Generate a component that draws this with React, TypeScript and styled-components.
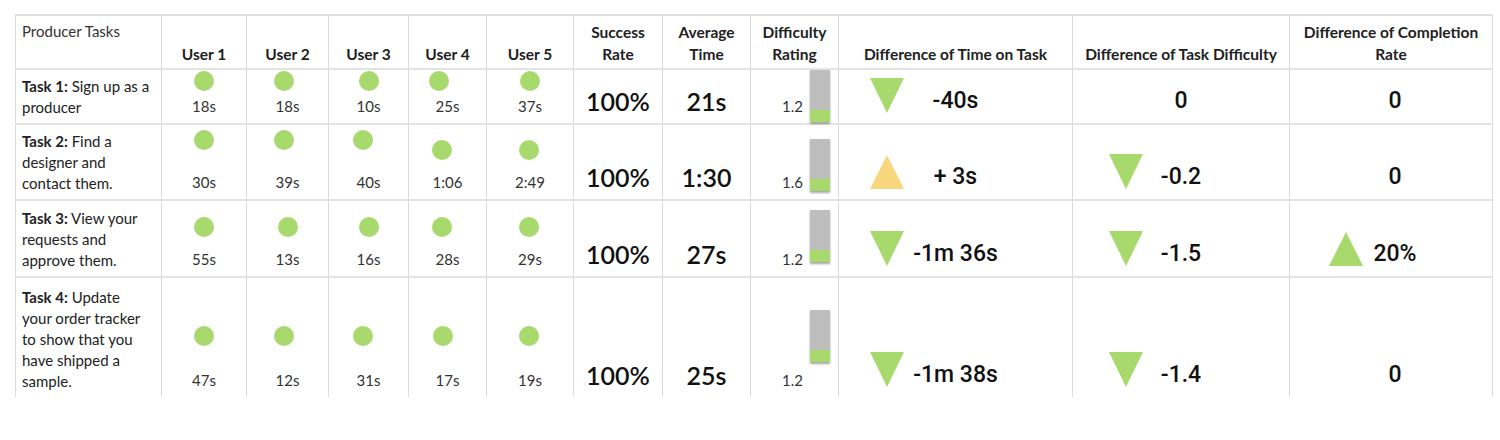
import React from 'react';
import styled, { createGlobalStyle } from 'styled-components';

const GREEN = '#a7d96c';
const YELLOW = '#f8d77c';
const LINE = '#dadada';

type Trend = { dir?: 'up' | 'down'; color?: string; text: string };
type UserResult = { t: string; dx?: number; dy?: number };
type TaskRow = {
  title: string;
  lines: string[];
  height: number;
  dotGap: number;
  users: UserResult[];
  success: string;
  avg: string;
  rating: string;
  barLift: number;
  time: Trend;
  difficulty: Trend;
  completion: Trend;
};

const COLUMNS = [146, 85, 82, 80, 78, 87, 89, 88, 88, 234, 217, 203];

const ROWS: TaskRow[] = [
  {
    title: 'Task 1:',
    lines: ['Sign up as a', 'producer'],
    height: 55,
    dotGap: 6,
    users: [{ t: '18s' }, { t: '18s', dx: -4 }, { t: '10s' }, { t: '25s', dx: -9 }, { t: '37s' }],
    success: '100%',
    avg: '21s',
    rating: '1.2',
    barLift: 1,
    time: { dir: 'down', color: GREEN, text: '-40s' },
    difficulty: { text: '0' },
    completion: { text: '0' },
  },
  {
    title: 'Task 2:',
    lines: ['Find a', 'designer and', 'contact them.'],
    height: 76,
    dotGap: 23,
    users: [
      { t: '30s' },
      { t: '39s', dx: -4 },
      { t: '40s', dx: -6 },
      { t: '1:06', dx: -6, dy: 10 },
      { t: '2:49', dx: -1, dy: 10 },
    ],
    success: '100%',
    avg: '1:30',
    rating: '1.6',
    barLift: 8,
    time: { dir: 'up', color: YELLOW, text: '+ 3s' },
    difficulty: { dir: 'down', color: GREEN, text: '-0.2' },
    completion: { text: '0' },
  },
  {
    title: 'Task 3:',
    lines: ['View your', 'requests and', 'approve them.'],
    height: 77,
    dotGap: 13,
    users: [{ t: '55s' }, { t: '13s' }, { t: '16s' }, { t: '28s', dx: -6 }, { t: '29s', dx: -1 }],
    success: '100%',
    avg: '27s',
    rating: '1.2',
    barLift: 14,
    time: { dir: 'down', color: GREEN, text: '-1m 36s' },
    difficulty: { dir: 'down', color: GREEN, text: '-1.5' },
    completion: { dir: 'up', color: GREEN, text: '20%' },
  },
  {
    title: 'Task 4:',
    lines: ['Update', 'your order tracker', 'to show that you', 'have shipped a', 'sample.'],
    height: 120,
    dotGap: 25,
    users: [
      { t: '47s' },
      { t: '12s', dx: -4 },
      { t: '31s', dx: -6 },
      { t: '17s', dx: -5 },
      { t: '19s', dx: -1 },
    ],
    success: '100%',
    avg: '25s',
    rating: '1.2',
    barLift: 35,
    time: { dir: 'down', color: GREEN, text: '-1m 38s' },
    difficulty: { dir: 'down', color: GREEN, text: '-1.4' },
    completion: { text: '0' },
  },
];

function Arrow({ dir, color }: { dir: 'up' | 'down'; color: string }) {
  return (
    <svg width="34" height="35" viewBox="0 0 34 35">
      {dir === 'down' ? (
        <polygon points="0,0 34,0 17,35" fill={color} />
      ) : (
        <polygon points="17,1 34,35 0,35" fill={color} />
      )}
    </svg>
  );
}

function TrendCell({ trend, inset, shift = 0 }: { trend: Trend; inset: number; shift?: number }) {
  return (
    <FlatCell>
      <TrendBox $side={inset + 34} $shift={shift}>
        <ArrowSlot>{trend.dir && <Arrow dir={trend.dir} color={trend.color || GREEN} />}</ArrowSlot>
        <TrendText>{trend.text}</TrendText>
        <span />
      </TrendBox>
    </FlatCell>
  );
}

export default function App() {
  return (
    <Page>
      <GlobalStyle />
      <Table>
        <colgroup>
          {COLUMNS.map((w, i) => (
            <col key={i} width={w} />
          ))}
        </colgroup>
        <thead>
          <HeadRow>
            <CornerCell>Producer Tasks</CornerCell>
            <HeadCell>User 1</HeadCell>
            <HeadCell>User 2</HeadCell>
            <HeadCell>User 3</HeadCell>
            <HeadCell>User 4</HeadCell>
            <HeadCell>User 5</HeadCell>
            <HeadCell>
              Success
              <br />
              Rate
            </HeadCell>
            <HeadCell>
              Average
              <br />
              Time
            </HeadCell>
            <HeadCell>
              Difficulty
              <br />
              Rating
            </HeadCell>
            <HeadCell>Difference of Time on Task</HeadCell>
            <HeadCell>Difference of Task Difficulty</HeadCell>
            <HeadCell>
              Difference of Completion
              <br />
              Rate
            </HeadCell>
          </HeadRow>
        </thead>
        <tbody>
          {ROWS.map((row) => (
            <Row key={row.title} $height={row.height}>
              <TaskCell>
                <b>{row.title}</b> {row.lines[0]}
                {row.lines.slice(1).map((line) => (
                  <React.Fragment key={line}>
                    <br />
                    {line}
                  </React.Fragment>
                ))}
              </TaskCell>
              {row.users.map((u, i) => (
                <FlatCell key={i}>
                  <UserStack>
                    <Dot $gap={row.dotGap} $dx={u.dx || 0} $dy={u.dy || 0} />
                    <SmallLabel>{u.t}</SmallLabel>
                  </UserStack>
                </FlatCell>
              ))}
              <BigCell>{row.success}</BigCell>
              <BigCell>{row.avg}</BigCell>
              <FlatCell>
                <RatingBox>
                  <SmallLabel>{row.rating}</SmallLabel>
                  <RatingBar $lift={row.barLift}>
                    <RatingFill />
                  </RatingBar>
                </RatingBox>
              </FlatCell>
              <TrendCell trend={row.time} inset={31} />
              <TrendCell trend={row.difficulty} inset={36} />
              <TrendCell trend={row.completion} inset={31} shift={8} />
            </Row>
          ))}
        </tbody>
      </Table>
    </Page>
  );
}

const GlobalStyle = createGlobalStyle`
  html, body {
    margin: 0;
    padding: 0;
    background: #ffffff;
  }
  body {
    font-family: Lato, "Open Sans", sans-serif;
    color: #222;
  }
`;

const Page = styled.div`
  width: 1500px;
  height: 440px;
  overflow: hidden;
  padding: 14px 0 0 15px;
  box-sizing: border-box;
`;

const Table = styled.table`
  width: 1477px;
  table-layout: fixed;
  border-collapse: collapse;
  border-top: 2px solid #e0e0e0;
  border-left: 1px solid ${LINE};
`;

const HeadRow = styled.tr`
  height: 54px;
`;

const HeadCell = styled.th`
  padding: 0 2px 3px;
  vertical-align: bottom;
  text-align: center;
  font-size: 15.5px;
  font-weight: 700;
  line-height: 22px;
  color: #222;
  white-space: nowrap;
  border-right: 1px solid ${LINE};
  border-bottom: 2px solid #e3e3e3;
`;

const CornerCell = styled(HeadCell)`
  vertical-align: top;
  text-align: left;
  font-size: 15px;
  font-weight: 400;
  color: #333;
  padding: 4px 6px 0;
`;

const Row = styled.tr<{ $height: number }>`
  height: ${(p) => p.$height}px;
  &:not(:last-child) > td {
    border-bottom: 2px solid #e3e3e3;
  }
`;

const FlatCell = styled.td`
  padding: 0;
  vertical-align: bottom;
  border-right: 1px solid ${LINE};
`;

const TaskCell = styled(FlatCell)`
  padding: 0 2px 5px 6px;
  font-size: 15px;
  line-height: 21px;
  color: #222;
  white-space: nowrap;

  b {
    font-weight: 700;
  }
`;

const UserStack = styled.div`
  display: flex;
  flex-direction: column;
  align-items: center;
  padding-bottom: 8px;
`;

const Dot = styled.div<{ $gap: number; $dx: number; $dy: number }>`
  width: 20px;
  height: 20px;
  border-radius: 50%;
  background: ${GREEN};
  margin-bottom: ${(p) => p.$gap}px;
  transform: translate(${(p) => p.$dx}px, ${(p) => p.$dy}px);
`;

const SmallLabel = styled.span`
  font-size: 15px;
  line-height: 18px;
  color: #333;
`;

const BigCell = styled(FlatCell)`
  padding-bottom: 9px;
  text-align: center;
  font-size: 25px;
  font-weight: 600;
  line-height: 26px;
  color: #111;
`;

const RatingBox = styled.div`
  display: flex;
  justify-content: flex-end;
  align-items: flex-end;
  gap: 7px;
  padding-right: 8px;

  ${SmallLabel} {
    margin-bottom: 8px;
  }
`;

const RatingBar = styled.div<{ $lift: number }>`
  width: 20px;
  height: 52px;
  margin-bottom: ${(p) => p.$lift}px;
  background: #bdbdbd;
  display: flex;
  align-items: flex-end;
  box-shadow: 0 2px 2px rgba(0, 0, 0, 0.35);
`;

const RatingFill = styled.div`
  width: 100%;
  height: 12px;
  background: ${GREEN};
`;

const TrendBox = styled.div<{ $side: number; $shift: number }>`
  display: grid;
  grid-template-columns: ${(p) => p.$side}px 1fr ${(p) => p.$side}px;
  align-items: end;
  padding: 0 0 9px ${(p) => p.$shift}px;
`;

const ArrowSlot = styled.div`
  display: flex;
  justify-content: flex-end;
  height: 35px;
  margin-bottom: 1px;
`;

const TrendText = styled.span`
  text-align: center;
  font-family: Roboto, "Liberation Sans", sans-serif;
  font-size: 23px;
  font-weight: 500;
  line-height: 26px;
  color: #111;
  white-space: nowrap;
`;
